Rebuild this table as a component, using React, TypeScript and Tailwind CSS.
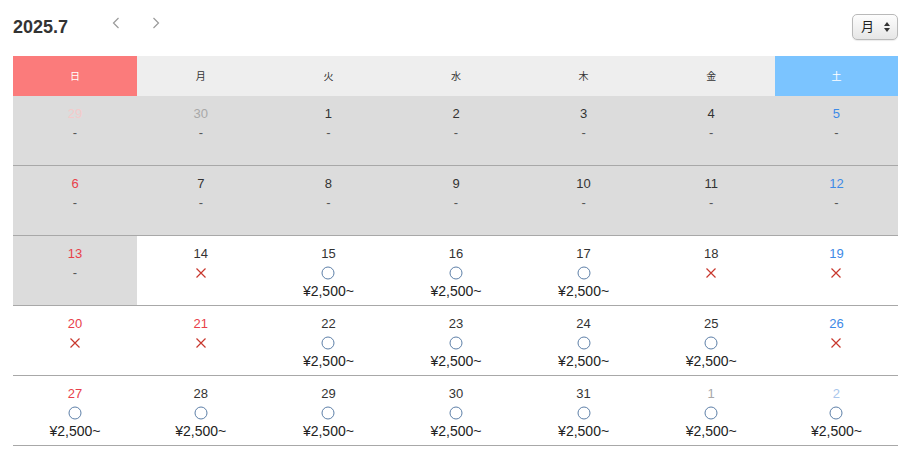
import React from "react";

type Cell = {
  d: string;
  kind: "prev" | "cur" | "next";
  past: boolean;
  mark: "-" | "x" | "o";
  holiday?: boolean;
};

const rows: Cell[][] = [
  [
    { d: "29", kind: "prev", past: true, mark: "-" },
    { d: "30", kind: "prev", past: true, mark: "-" },
    { d: "1", kind: "cur", past: true, mark: "-" },
    { d: "2", kind: "cur", past: true, mark: "-" },
    { d: "3", kind: "cur", past: true, mark: "-" },
    { d: "4", kind: "cur", past: true, mark: "-" },
    { d: "5", kind: "cur", past: true, mark: "-" },
  ],
  [
    { d: "6", kind: "cur", past: true, mark: "-" },
    { d: "7", kind: "cur", past: true, mark: "-" },
    { d: "8", kind: "cur", past: true, mark: "-" },
    { d: "9", kind: "cur", past: true, mark: "-" },
    { d: "10", kind: "cur", past: true, mark: "-" },
    { d: "11", kind: "cur", past: true, mark: "-" },
    { d: "12", kind: "cur", past: true, mark: "-" },
  ],
  [
    { d: "13", kind: "cur", past: true, mark: "-" },
    { d: "14", kind: "cur", past: false, mark: "x" },
    { d: "15", kind: "cur", past: false, mark: "o" },
    { d: "16", kind: "cur", past: false, mark: "o" },
    { d: "17", kind: "cur", past: false, mark: "o" },
    { d: "18", kind: "cur", past: false, mark: "x" },
    { d: "19", kind: "cur", past: false, mark: "x" },
  ],
  [
    { d: "20", kind: "cur", past: false, mark: "x" },
    { d: "21", kind: "cur", past: false, mark: "x", holiday: true },
    { d: "22", kind: "cur", past: false, mark: "o" },
    { d: "23", kind: "cur", past: false, mark: "o" },
    { d: "24", kind: "cur", past: false, mark: "o" },
    { d: "25", kind: "cur", past: false, mark: "o" },
    { d: "26", kind: "cur", past: false, mark: "x" },
  ],
  [
    { d: "27", kind: "cur", past: false, mark: "o" },
    { d: "28", kind: "cur", past: false, mark: "o" },
    { d: "29", kind: "cur", past: false, mark: "o" },
    { d: "30", kind: "cur", past: false, mark: "o" },
    { d: "31", kind: "cur", past: false, mark: "o" },
    { d: "1", kind: "next", past: false, mark: "o" },
    { d: "2", kind: "next", past: false, mark: "o" },
  ],
];

const headers = ["日", "月", "火", "水", "木", "金", "土"];

function dateColor(c: Cell, col: number) {
  if (c.kind === "prev") {
    if (col === 0) return "text-[#f4caca]";
    return "text-[#a8a8a8]";
  }
  if (c.kind === "next") {
    if (col === 6) return "text-[#a9c6ec]";
    return "text-[#a8a8a8]";
  }
  if (col === 0 || c.holiday) return "text-[#e8404a]";
  if (col === 6) return "text-[#3d8ae6]";
  return "text-[#333333]";
}

function Mark({ m }: { m: Cell["mark"] }) {
  if (m === "-") return <div className="h-[19px] leading-[19px] text-[#555]">-</div>;
  if (m === "x")
    return (
      <div className="h-[19px] flex items-center justify-center">
        <svg width="12" height="12" viewBox="0 0 12 12">
          <path d="M1.5 1.5 L10.5 10.5 M10.5 1.5 L1.5 10.5" stroke="#c8372d" strokeWidth="1.2" fill="none" />
        </svg>
      </div>
    );
  return (
    <div className="h-[19px] flex items-center justify-center">
      <svg width="14" height="14" viewBox="0 0 14 14">
        <circle cx="7" cy="7" r="6" stroke="#5d7fa8" strokeWidth="1" fill="none" />
      </svg>
    </div>
  );
}

export default function App() {
  return (
    <div
      className="w-[914px] h-[462px] bg-white pl-[13px] pr-[16px] pt-[13px]"
      style={{ fontFamily: '"Liberation Sans", Arial, "Noto Sans CJK JP", sans-serif' }}
    >
      <div className="flex items-center h-[27px]">
        <div className="text-[18px] font-bold text-[#333] leading-[27px] w-[99px] pt-[1px]">2025.7</div>
        <div className="flex items-center gap-[32px] -mt-[7px]">
          <svg width="8" height="12" viewBox="0 0 8 12">
            <path d="M6.5 1 L1.5 6 L6.5 11" stroke="#9a9a9a" strokeWidth="1.2" fill="none" />
          </svg>
          <svg width="8" height="12" viewBox="0 0 8 12">
            <path d="M1.5 1 L6.5 6 L1.5 11" stroke="#9a9a9a" strokeWidth="1.2" fill="none" />
          </svg>
        </div>
        <div className="ml-auto h-[26px] w-[46px] rounded-[5px] border border-[#b9b9b9] bg-gradient-to-b from-[#fdfdfd] to-[#e6e6e6] flex items-center pl-[8px] pr-[6px] shadow-[0_1px_1px_rgba(0,0,0,0.08)]">
          <span className="text-[13px] text-[#222] leading-none">月</span>
          <svg className="ml-auto" width="8" height="12" viewBox="0 0 8 12">
            <path d="M4 1 L7 5 L1 5 Z M4 11 L7 7 L1 7 Z" fill="#333" />
          </svg>
        </div>
      </div>

      <div className="mt-[16px]">
        <div className="grid grid-cols-[124px_repeat(5,1fr)_123px] h-[40px]">
          {headers.map((h, i) => (
            <div
              key={h}
              className={
                "flex items-center justify-center text-[10px] " +
                (i === 0
                  ? "bg-[#fb7b7b] text-white"
                  : i === 6
                  ? "bg-[#7bc4ff] text-white"
                  : "bg-[#eeeeee] text-[#333]")
              }
            >
              {h}
            </div>
          ))}
        </div>
        {rows.map((r, ri) => (
          <div
            key={ri}
            className="grid grid-cols-[124px_repeat(5,1fr)_123px] h-[70px] border-b border-[#a8a8a8]"
          >
            {r.map((c, ci) => (
              <div
                key={ci}
                className={
                  "flex flex-col items-center pt-[8px] text-[13px] " +
                  (c.past ? "bg-[#dcdcdc]" : "bg-white")
                }
              >
                <div className={"h-[19px] leading-[19px] " + dateColor(c, ci)}>{c.d}</div>
                <Mark m={c.mark} />
                {c.mark === "o" && (
                  <div className="h-[19px] leading-[19px] text-[14px] text-[#222]">¥2,500~</div>
                )}
              </div>
            ))}
          </div>
        ))}
      </div>
    </div>
  );
}
